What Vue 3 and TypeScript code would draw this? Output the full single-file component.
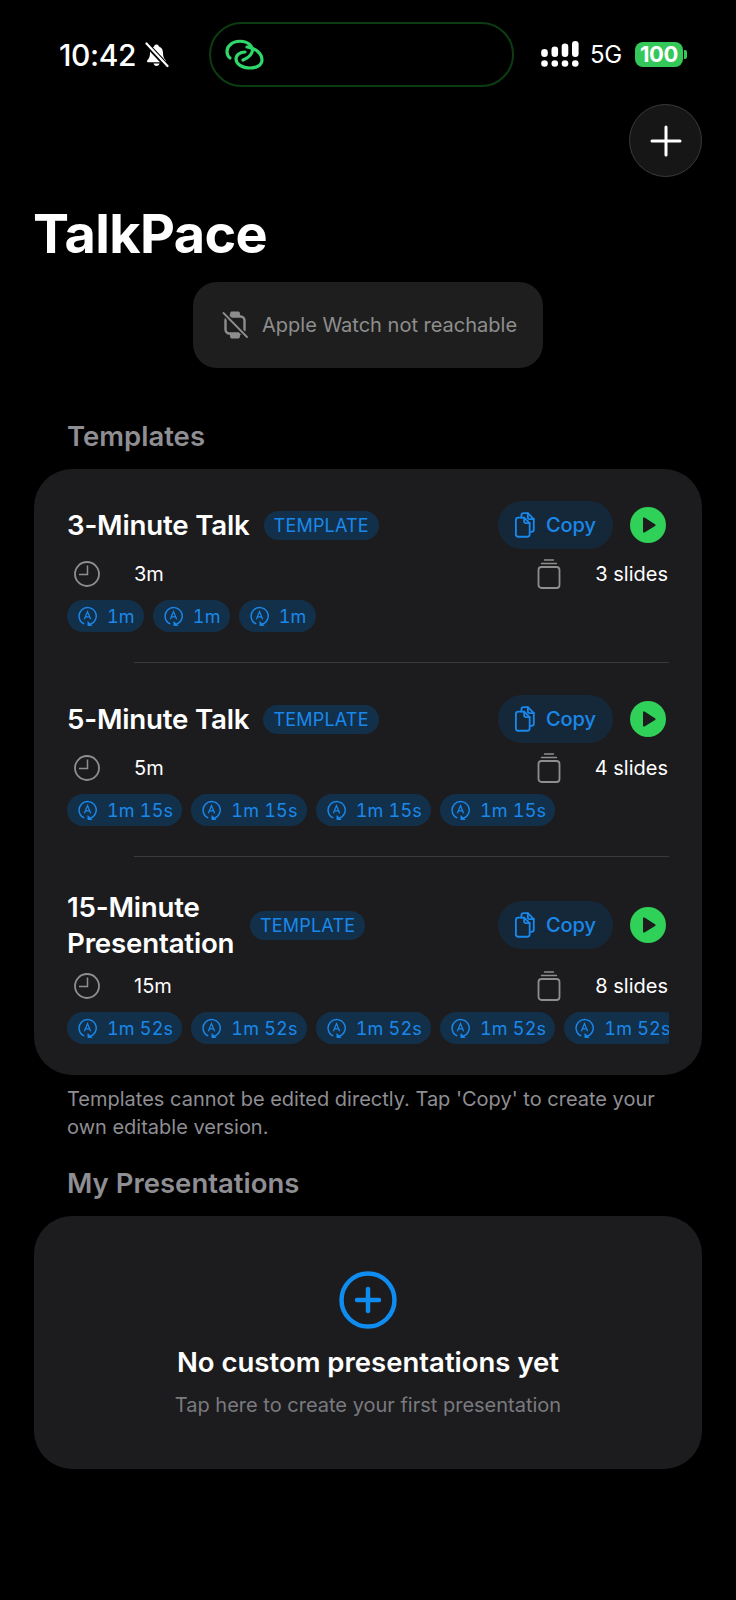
<template>
  <div class="screen">
    <header class="status-bar">
      <div class="status-left">
        <span class="time">10:42</span>
        <svg class="bell" width="25" height="26" viewBox="0 0 25 26">
          <path d="M12.5 2.5c-1.4 0-2.2.9-2.4 2C7.400 5.400 6 7.800 6 10.800c0 3.400-.7 5.400-2.600 7.400-.8.900-.2 2.100 1 2.100h16.200c1.200 0 1.800-1.200 1-2.100-1.900-2-2.600-4-2.600-7.400 0-3-1.400-5.400-4.100-6.300-.2-1.100-1-2-2.400-2z" fill="#fff"/>
          <path d="M9.500 21.500c.4 1.500 1.500 2.500 3 2.500s2.600-1 3-2.500z" fill="#fff"/>
          <path d="M2 1.500 23 24" stroke="#000" stroke-width="5"/>
          <path d="M2.500 1.500 23.500 24" stroke="#fff" stroke-width="2.200" stroke-linecap="round"/>
        </svg>
      </div>
      <div class="island">
        <svg width="40" height="32" viewBox="0 0 40 32" fill="none" stroke="#30d76a" stroke-width="3.200" stroke-linecap="round">
          <path d="M5 19C1 16 1 9 5 6c5-5 15-5 20 0 5 5 2 11-7 15"/>
          <path d="M22 8c8 1 15 6 15 13 0 6-7 8-12 8-8 0-14-4-14-9 0-4 4-7 9-7"/>
        </svg>
      </div>
      <div class="status-right">
        <svg width="38" height="26" viewBox="0 0 38 26" fill="#fff">
          <circle cx="3.500" cy="22.500" r="3.300"/>
          <circle cx="13.800" cy="22.500" r="3.300"/>
          <circle cx="24" cy="22.500" r="3.300"/>
          <circle cx="34.300" cy="22.500" r="3.300"/>
          <rect x="0.200" y="8" width="6.600" height="8" rx="3.300"/>
          <rect x="10.500" y="5.500" width="6.600" height="10.500" rx="3.300"/>
          <rect x="20.700" y="2.500" width="6.600" height="13.500" rx="3.300"/>
          <rect x="31" y="0" width="6.600" height="16" rx="3.300"/>
        </svg>
        <span class="network">5G</span>
        <div class="battery">
          <span class="battery-body">100</span>
          <span class="battery-cap"></span>
        </div>
      </div>
    </header>

    <div class="toolbar">
      <button class="add-btn">
        <svg width="32" height="32" viewBox="0 0 32 32" stroke="#fff" stroke-width="3" stroke-linecap="round">
          <path d="M16 2v28M2 16h28"/>
        </svg>
      </button>
    </div>

    <h1 class="page-title">TalkPace</h1>

    <div class="toast-wrap">
      <div class="toast">
        <svg width="26" height="30" viewBox="0 0 26 30" fill="none" stroke="#8e8e8e">
          <path d="M8 6.500 9 2h8l1 4.500M8 23.500 9 28h8l1-4.500" fill="#8e8e8e" stroke-width="1"/>
          <rect x="3.500" y="6.500" width="19" height="17" rx="4" stroke-width="2.400"/>
          <path d="M1.500 3 25 27" stroke="#1e1e1e" stroke-width="5"/>
          <path d="M1.500 3 25 27" stroke-width="1.800" stroke-linecap="round"/>
        </svg>
        <span>Apple Watch not reachable</span>
      </div>
    </div>

    <h2 class="section-title">Templates</h2>
    <section class="card">
      <article v-for="(t, i) in templates" :key="t.name" class="template">
        <div class="template-head">
          <h3 class="template-name" :class="{ wrapped: t.name.length > 14 }">{{ t.name }}</h3>
          <span class="badge">TEMPLATE</span>
          <button class="copy-btn">
            <svg width="22" height="26" viewBox="0 0 24 28" fill="none" stroke="#1a88ea" stroke-width="2" stroke-linejoin="round" stroke-linecap="round">
              <path d="M7 6V3.500C7 2.100 8 1 9.500 1h4.500l6.500 6.500v11.500c0 1.400-1 2.500-2.500 2.500h-1"/>
              <path d="M14 1v4.500c0 1.200.8 2 2 2h4.500"/>
              <path d="M3.500 6H10l6 6v12c0 1.600-1 2.800-2.600 2.800H3.500C2 26.800 1 25.600 1 24V8.800C1 7.200 2 6 3.500 6z"/>
              <path d="M10 6v4c0 1.200.8 2 2 2h4"/>
            </svg>
            <span>Copy</span>
          </button>
          <span class="play">
            <svg width="14" height="16" viewBox="0 0 14 16"><path d="M1 1.500v13a1 1 0 0 0 1.500.9l10.500-6.500a1 1 0 0 0 0-1.700L2.500.6A1 1 0 0 0 1 1.500z" fill="#1c1c1e"/></svg>
          </span>
        </div>
        <div class="template-meta">
          <svg class="clock" width="26" height="26" viewBox="0 0 26 26" fill="none" stroke="#8e8e8e" stroke-width="1.800">
            <circle cx="13" cy="13" r="12"/>
            <path d="M13.500 4.500v9H5" stroke-width="1.500"/>
          </svg>
          <span class="duration">{{ t.duration }}</span>
          <svg class="stack" width="24" height="30" viewBox="0 0 24 30" fill="none" stroke="#8e8e8e" stroke-linecap="round">
            <path d="M7.500 1h9" stroke-width="1.400"/>
            <path d="M4.500 4.500h15" stroke-width="1.400"/>
            <rect x="1.500" y="8" width="21" height="21" rx="3" stroke-width="1.800"/>
          </svg>
          <span class="slides">{{ t.slides }} slides</span>
        </div>
        <div class="chips">
          <span v-for="n in t.slides" :key="n" class="chip">
            <svg width="19" height="20" viewBox="0 0 20 21" fill="none" stroke="#1a88ea">
              <path d="M12.500 19.300A9 9 0 1 0 6 18.600" stroke-width="1.500" stroke-linecap="round"/>
              <path d="M10.500 16.500v4.200h4.200z" fill="#1a88ea" stroke-width="1"/>
              <path d="M6.700 14 10 5.800l3.300 8.200M7.800 11.400h4.400" stroke-width="1.300"/>
            </svg>
            <span>{{ t.per }}</span>
          </span>
        </div>
        <div v-if="i < templates.length - 1" class="divider"></div>
      </article>
    </section>
    <p class="note">Templates cannot be edited directly. Tap 'Copy' to create your own editable version.</p>

    <h2 class="section-title mine">My Presentations</h2>
    <section class="empty">
      <svg width="58" height="58" viewBox="0 0 58 58" fill="none" stroke="#0f8cf0" stroke-linecap="round">
        <circle cx="29" cy="29" r="26.500" stroke-width="4.500"/>
        <path d="M29 18v22M18 29h22" stroke-width="4.500"/>
      </svg>
      <h3 class="empty-title">No custom presentations yet</h3>
      <p class="empty-sub">Tap here to create your first presentation</p>
    </section>
  </div>
</template>

<script setup lang="ts">
interface TalkTemplate {
  name: string;
  duration: string;
  slides: number;
  per: string;
}

const templates: TalkTemplate[] = [
  { name: '3-Minute Talk', duration: '3m', slides: 3, per: '1m' },
  { name: '5-Minute Talk', duration: '5m', slides: 4, per: '1m 15s' },
  { name: '15-Minute Presentation', duration: '15m', slides: 8, per: '1m 52s' },
];
</script>

<style>
html,
body {
  background: #000;
}
</style>

<style scoped>
.screen {
  width: 736px;
  height: 1600px;
  overflow: hidden;
  background: #000;
  color: #fff;
  font-family: Inter, 'Liberation Sans', sans-serif;
  box-sizing: border-box;
  padding: 22px 34px 0 34px;
}
.status-bar {
  display: flex;
  align-items: flex-start;
  height: 65px;
  margin: 0 -34px;
  padding-left: 59px;
}
.status-left {
  display: flex;
  align-items: center;
  gap: 8px;
  width: 150px;
  height: 66px;
}
.time {
  font-size: 30px;
  font-weight: 500;
  letter-spacing: -0.4px;
}
.island {
  width: 305px;
  height: 65px;
  box-sizing: border-box;
  border: 2px solid #0c3d12;
  border-radius: 33px;
  display: flex;
  align-items: center;
  padding-left: 14px;
}
.status-right {
  display: flex;
  align-items: center;
  height: 64px;
  margin-left: 27px;
}
.network {
  font-size: 24px;
  margin-left: 11px;
  letter-spacing: -0.3px;
}
.battery {
  display: flex;
  align-items: center;
  margin-left: 13px;
}
.battery-body {
  width: 48px;
  height: 25px;
  background: #34c759;
  border-radius: 8px;
  font-size: 22px;
  font-weight: 700;
  line-height: 25px;
  text-align: center;
  letter-spacing: -0.5px;
}
.battery-cap {
  width: 3px;
  height: 9px;
  margin-left: 1px;
  background: #34c759;
  border-radius: 0 2px 2px 0;
}
.toolbar {
  display: flex;
  justify-content: flex-end;
  margin-top: 17px;
}
.add-btn {
  width: 73px;
  height: 73px;
  border-radius: 50%;
  background: #161616;
  border: 1.500px solid #3a3a3a;
  padding: 0;
  display: flex;
  align-items: center;
  justify-content: center;
}
.page-title {
  margin: 25px 0 0 -1px;
  font-size: 54px;
  line-height: 64px;
  font-weight: 700;
  letter-spacing: -0.6px;
}
.toast-wrap {
  display: flex;
  justify-content: center;
  margin-top: 16px;
}
.toast {
  width: 350px;
  height: 86px;
  box-sizing: border-box;
  background: #1e1e1e;
  border-radius: 24px;
  display: flex;
  align-items: center;
  padding-left: 29px;
  gap: 14px;
  font-size: 20px;
  color: #8e8e8e;
}
.section-title {
  margin: 50px 0 0 33px;
  font-size: 27.500px;
  line-height: 36px;
  font-weight: 600;
  color: #8e8e93;
}
.section-title.mine {
  margin-top: 24px;
}
.card {
  margin-top: 15px;
  background: #1c1c1e;
  border-radius: 38px;
  padding: 32px 33px 31px 33px;
}
.template-head {
  display: flex;
  align-items: center;
  min-height: 48px;
}
.template-name {
  margin: 0;
  font-size: 27.700px;
  line-height: 36px;
  font-weight: 600;
  letter-spacing: -0.2px;
}
.template-name.wrapped {
  width: 169px;
}
.badge {
  margin-left: 14px;
  height: 29px;
  padding: 0 10px;
  border-radius: 15px;
  background: #13304a;
  color: #1a88ea;
  font-size: 18px;
  line-height: 29px;
  letter-spacing: 0.2px;
}
.copy-btn {
  margin-left: auto;
  width: 115px;
  height: 48px;
  border: none;
  border-radius: 24px;
  background: #15283a;
  color: #1a88ea;
  font-family: inherit;
  font-size: 20px;
  font-weight: 500;
  display: flex;
  align-items: center;
  justify-content: center;
  gap: 9px;
  padding: 0;
}
.play {
  margin: 0 3px 0 17px;
  width: 36px;
  height: 36px;
  border-radius: 50%;
  background: #30d158;
  display: flex;
  align-items: center;
  justify-content: center;
  padding-left: 2px;
  box-sizing: border-box;
}
.template-meta {
  display: flex;
  align-items: center;
  height: 40px;
  margin-top: 5px;
  font-size: 20px;
}
.clock {
  margin-left: 7px;
}
.duration {
  margin-left: 34px;
}
.stack {
  margin-left: auto;
  margin-right: -1px;
}
.slides {
  width: 84px;
  margin-left: 24px;
  text-align: right;
  margin-right: 1px;
}
.chips {
  display: flex;
  gap: 9px;
  overflow: hidden;
  margin-top: 6px;
  width: 602px;
}
.chip {
  flex: none;
  height: 32px;
  border-radius: 16px;
  background: #13304a;
  color: #1a88ea;
  font-size: 18px;
  font-variant-numeric: tabular-nums;
  letter-spacing: 0.2px;
  display: flex;
  align-items: center;
  gap: 10px;
  padding: 0 9px 0 11px;
}
.divider {
  height: 1.500px;
  margin: 29.500px 0 32px 67px;
  background: #3a3a3c;
}
.note {
  margin: 11px 0 0 33px;
  width: 620px;
  font-size: 20px;
  line-height: 27.500px;
  color: #8e8e93;
}
.empty {
  margin-top: 15px;
  height: 253px;
  box-sizing: border-box;
  background: #1c1c1e;
  border-radius: 38px;
  display: flex;
  flex-direction: column;
  align-items: center;
  padding-top: 55px;
}
.empty-title {
  margin: 15px 0 0 0;
  font-size: 27.500px;
  line-height: 36px;
  font-weight: 600;
}
.empty-sub {
  margin: 11px 0 0 0;
  font-size: 20px;
  line-height: 28px;
  color: #7a7a7e;
}
</style>
